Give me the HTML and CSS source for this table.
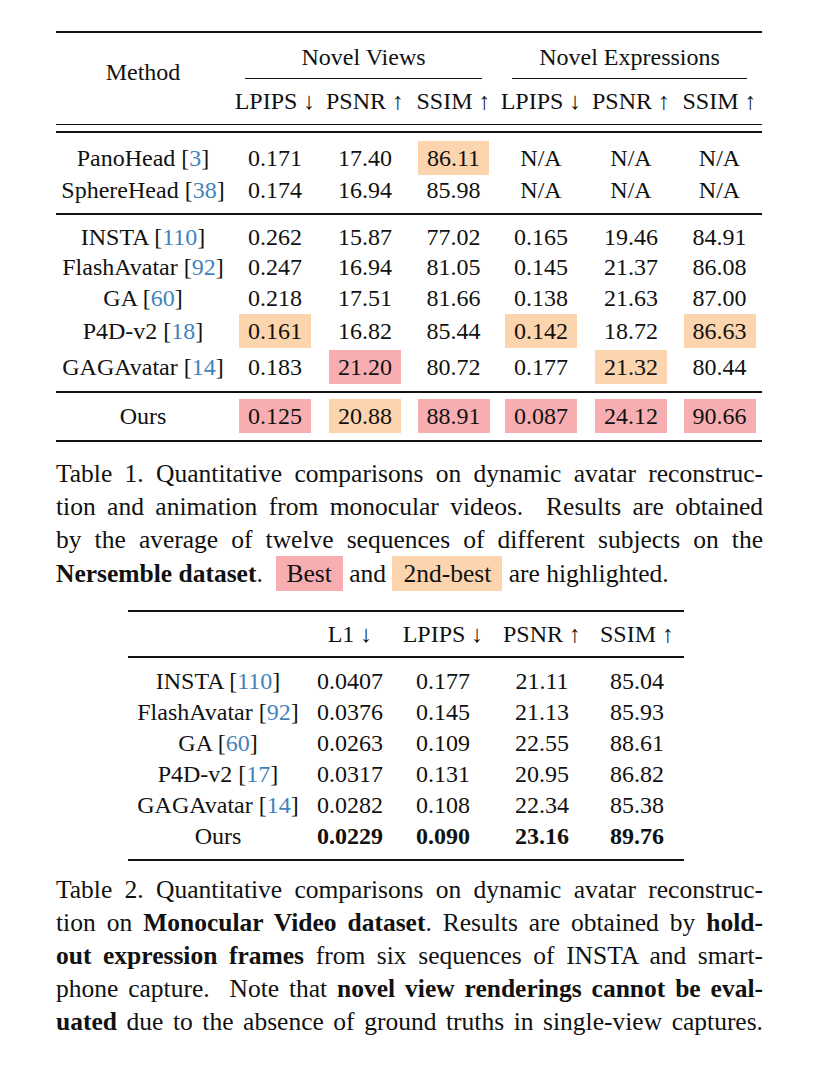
FILE: index.html
```html
<!DOCTYPE html>
<html lang="en">
<head>
<meta charset="utf-8">
<title>Quantitative comparisons</title>
<link rel="stylesheet" href="styles.css">
</head>
<body>
<main class="page">
  <table class="t1">
    <colgroup>
      <col class="w174"><col class="w90"><col class="w90"><col class="w87"><col class="w88"><col class="w92"><col class="w85">
    </colgroup>
    <thead>
      <tr class="h1">
        <th rowspan="2" class="method">Method</th>
        <th colspan="3" class="group"><div class="cmid">Novel Views</div></th>
        <th colspan="3" class="group"><div class="cmid">Novel Expressions</div></th>
      </tr>
      <tr class="h2">
        <th>LPIPS ↓</th><th>PSNR ↑</th><th>SSIM ↑</th>
        <th>LPIPS ↓</th><th>PSNR ↑</th><th>SSIM ↑</th>
      </tr>
      <tr class="dbl"><th colspan="7"></th></tr>
    </thead>
    <tbody class="g1">
      <tr class="r-first l34">
        <td>PanoHead [<span class="ref">3</span>]</td><td>0.171</td><td>17.40</td><td><span class="hl second">86.11</span></td><td>N/A</td><td>N/A</td><td>N/A</td>
      </tr>
      <tr class="r-last l31">
        <td>SphereHead [<span class="ref">38</span>]</td><td>0.174</td><td>16.94</td><td>85.98</td><td>N/A</td><td>N/A</td><td>N/A</td>
      </tr>
    </tbody>
    <tbody class="g2 mid">
      <tr class="r-first l30">
        <td>INSTA [<span class="ref">110</span>]</td><td>0.262</td><td>15.87</td><td>77.02</td><td>0.165</td><td>19.46</td><td>84.91</td>
      </tr>
      <tr class="l31">
        <td>FlashAvatar [<span class="ref">92</span>]</td><td>0.247</td><td>16.94</td><td>81.05</td><td>0.145</td><td>21.37</td><td>86.08</td>
      </tr>
      <tr class="l31">
        <td>GA [<span class="ref">60</span>]</td><td>0.218</td><td>17.51</td><td>81.66</td><td>0.138</td><td>21.63</td><td>87.00</td>
      </tr>
      <tr class="l35">
        <td>P4D-v2 [<span class="ref">18</span>]</td><td><span class="hl second">0.161</span></td><td>16.82</td><td>85.44</td><td><span class="hl second">0.142</span></td><td>18.72</td><td><span class="hl second">86.63</span></td>
      </tr>
      <tr class="r-last l36">
        <td>GAGAvatar [<span class="ref">14</span>]</td><td>0.183</td><td><span class="hl best">21.20</span></td><td>80.72</td><td>0.177</td><td><span class="hl second">21.32</span></td><td>80.44</td>
      </tr>
    </tbody>
    <tbody class="g3 mid">
      <tr class="l47 bottom">
        <td>Ours</td><td><span class="hl best">0.125</span></td><td><span class="hl second">20.88</span></td><td><span class="hl best">88.91</span></td><td><span class="hl best">0.087</span></td><td><span class="hl best">24.12</span></td><td><span class="hl best">90.66</span></td>
      </tr>
    </tbody>
  </table>

  <p class="cap cap1">
    <span class="ln">Table 1. Quantitative comparisons on dynamic avatar reconstruc-</span>
    <span class="ln">tion and animation from monocular videos. &nbsp;Results are obtained</span>
    <span class="ln">by the average of twelve sequences of different subjects on the</span>
    <span class="ln last"><b>Nersemble dataset</b>. &nbsp;<span class="chip best">Best</span> and <span class="chip second">2nd-best</span> are highlighted.</span>
  </p>

  <table class="t2">
    <colgroup>
      <col class="w180"><col class="w84"><col class="w102"><col class="w96"><col class="w94">
    </colgroup>
    <thead>
      <tr class="h">
        <th></th><th>L1 ↓</th><th>LPIPS ↓</th><th>PSNR ↑</th><th>SSIM ↑</th>
      </tr>
    </thead>
    <tbody>
      <tr class="r-first"><td>INSTA [<span class="ref">110</span>]</td><td>0.0407</td><td>0.177</td><td>21.11</td><td>85.04</td></tr>
      <tr><td>FlashAvatar [<span class="ref">92</span>]</td><td>0.0376</td><td>0.145</td><td>21.13</td><td>85.93</td></tr>
      <tr><td>GA [<span class="ref">60</span>]</td><td>0.0263</td><td>0.109</td><td>22.55</td><td>88.61</td></tr>
      <tr><td>P4D-v2 [<span class="ref">17</span>]</td><td>0.0317</td><td>0.131</td><td>20.95</td><td>86.82</td></tr>
      <tr><td>GAGAvatar [<span class="ref">14</span>]</td><td>0.0282</td><td>0.108</td><td>22.34</td><td>85.38</td></tr>
      <tr class="r-last ours"><td>Ours</td><td><b>0.0229</b></td><td><b>0.090</b></td><td><b>23.16</b></td><td><b>89.76</b></td></tr>
    </tbody>
  </table>

  <p class="cap cap2">
    <span class="ln">Table 2. Quantitative comparisons on dynamic avatar reconstruc-</span>
    <span class="ln">tion on <b>Monocular Video dataset</b>. Results are obtained by <b>hold-</b></span>
    <span class="ln"><b>out expression frames</b> from six sequences of INSTA and smart-</span>
    <span class="ln">phone capture. &nbsp;Note that <b>novel view renderings cannot be eval-</b></span>
    <span class="ln"><b>uated</b> due to the absence of ground truths in single-view captures.</span>
  </p>
</main>
</body>
</html>
```

FILE: styles.css
```css
* {
  box-sizing: border-box;
}

html,
body {
  margin: 0;
  padding: 0;
  background: #ffffff;
}

body {
  font-family: "Liberation Serif", "Times New Roman", serif;
  color: #111111;
}

.page {
  width: 824px;
  padding: 31px 61px 0 56px;
}

/* ---------- tables ---------- */
table {
  border-collapse: separate;
  border-spacing: 0;
  table-layout: fixed;
  font-size: 24px;
}

th,
td {
  padding: 0;
  text-align: center;
  font-weight: normal;
  white-space: nowrap;
  vertical-align: middle;
}

.ref {
  color: #4283bb;
}

.w174 { width: 174px; }
.w90 { width: 90px; }
.w87 { width: 87px; }
.w88 { width: 88px; }
.w92 { width: 92px; }
.w85 { width: 85px; }
.w180 { width: 180px; }
.w84 { width: 84px; }
.w102 { width: 102px; }
.w96 { width: 96px; }
.w94 { width: 94px; }

.t1 {
  width: 706px;
}

.t1 .h1 th {
  border-top: 2px solid #111;
}

.t1 .method {
  padding-bottom: 13px;
  line-height: 30px;
}

.t1 .group {
  padding: 9px 15px 0;
  vertical-align: bottom;
}

.t1 .cmid {
  line-height: 30px;
  padding-bottom: 6px;
  border-bottom: 1px solid #111;
}

.t1 .h2 th {
  line-height: 45px;
}

.t1 .dbl th {
  padding: 6px 0 0;
  height: 0;
  line-height: 0;
  font-size: 0;
  border-top: 1px solid #111;
  border-bottom: 2px solid #111;
}

.t1 .l30 td { line-height: 30px; }
.t1 .l31 td { line-height: 31px; }
.t1 .l34 td { line-height: 34px; }
.t1 .l35 td { line-height: 35px; }
.t1 .l36 td { line-height: 36px; }
.t1 .l47 td { line-height: 47px; }

.t1 .g1 .r-first td { padding-top: 8px; }
.t1 .g1 .r-last td { padding-bottom: 7px; }
.t1 .g2 .r-first td { padding-top: 7px; }
.t1 .g2 .r-last td { padding-bottom: 6px; }

.t1 .mid tr:first-child td {
  border-top: 2px solid #111;
}

.t1 .bottom td {
  border-bottom: 2px solid #111;
}

.hl {
  display: inline-block;
  line-height: 24px;
  padding: 5px 9px;
}

.best {
  background: #f8aeb1;
}

.second {
  background: #fcd4ae;
}

/* ---------- table 2 ---------- */
.t2 {
  width: 556px;
  margin: 19px 0 0 72px;
}

.t2 .h th {
  line-height: 44px;
  border-top: 2px solid #111;
  border-bottom: 2px solid #111;
}

.t2 td {
  line-height: 31px;
}

.t2 .r-first td {
  padding-top: 8px;
}

.t2 .r-last td {
  padding-bottom: 7px;
  border-bottom: 2px solid #111;
}

.t2 b {
  font-weight: bold;
}

/* ---------- captions ---------- */
.cap {
  margin: 0;
  width: 707px;
  font-size: 25.5px;
  line-height: 33px;
}

.cap1 {
  margin-top: 15px;
}

.cap2 {
  margin-top: 12px;
}

.cap .ln {
  display: block;
  text-align: justify;
  text-align-last: justify;
}

.cap .ln.last {
  text-align-last: left;
}

.chip {
  display: inline-block;
  line-height: 25px;
  padding: 5px 11px;
}
```
